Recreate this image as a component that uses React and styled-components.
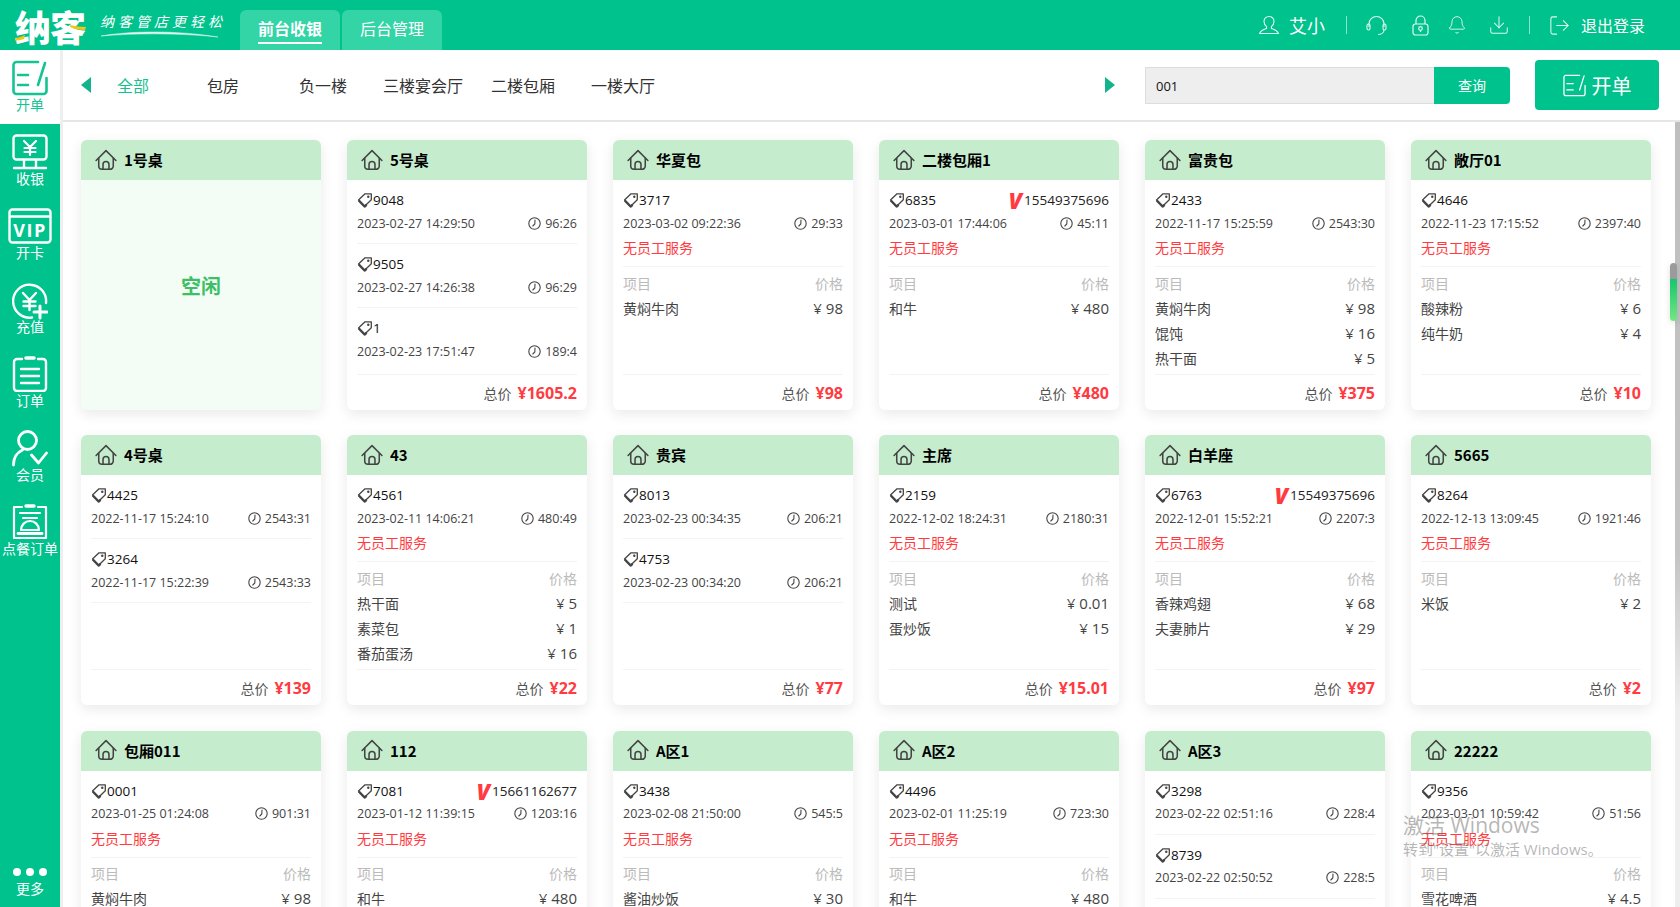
import React from 'react';
import styled, { createGlobalStyle } from 'styled-components';
import { Bell, Download, LogOut } from 'lucide-react';

const GREEN = '#00c28c';
const RED = '#ff3b41';

const tables = [
    { name: '1号桌', free: true },
    {
        name: '5号桌',
        total: '1605.2',
        orders: [
            { tag: '9048', time: '2023-02-27 14:29:50', dur: '96:26' },
            { tag: '9505', time: '2023-02-27 14:26:38', dur: '96:29' },
            { tag: '1', time: '2023-02-23 17:51:47', dur: '189:4' },
        ],
    },
    {
        name: '华夏包',
        total: '98',
        orders: [{ tag: '3717', time: '2023-03-02 09:22:36', dur: '29:33', staff: true }],
        items: [['黄焖牛肉', '98']],
    },
    {
        name: '二楼包厢1',
        total: '480',
        orders: [{ tag: '6835', phone: '15549375696', time: '2023-03-01 17:44:06', dur: '45:11', staff: true }],
        items: [['和牛', '480']],
    },
    {
        name: '富贵包',
        total: '375',
        orders: [{ tag: '2433', time: '2022-11-17 15:25:59', dur: '2543:30', staff: true }],
        items: [['黄焖牛肉', '98'], ['馄饨', '16'], ['热干面', '5']],
    },
    {
        name: '敞厅01',
        total: '10',
        orders: [{ tag: '4646', time: '2022-11-23 17:15:52', dur: '2397:40', staff: true }],
        items: [['酸辣粉', '6'], ['纯牛奶', '4']],
    },
    {
        name: '4号桌',
        total: '139',
        orders: [
            { tag: '4425', time: '2022-11-17 15:24:10', dur: '2543:31' },
            { tag: '3264', time: '2022-11-17 15:22:39', dur: '2543:33' },
        ],
    },
    {
        name: '43',
        total: '22',
        orders: [{ tag: '4561', time: '2023-02-11 14:06:21', dur: '480:49', staff: true }],
        items: [['热干面', '5'], ['素菜包', '1'], ['番茄蛋汤', '16']],
    },
    {
        name: '贵宾',
        total: '77',
        orders: [
            { tag: '8013', time: '2023-02-23 00:34:35', dur: '206:21' },
            { tag: '4753', time: '2023-02-23 00:34:20', dur: '206:21' },
        ],
    },
    {
        name: '主席',
        total: '15.01',
        orders: [{ tag: '2159', time: '2022-12-02 18:24:31', dur: '2180:31', staff: true }],
        items: [['测试', '0.01'], ['蛋炒饭', '15']],
    },
    {
        name: '白羊座',
        total: '97',
        orders: [{ tag: '6763', phone: '15549375696', time: '2022-12-01 15:52:21', dur: '2207:3', staff: true }],
        items: [['香辣鸡翅', '68'], ['夫妻肺片', '29']],
    },
    {
        name: '5665',
        total: '2',
        orders: [{ tag: '8264', time: '2022-12-13 13:09:45', dur: '1921:46', staff: true }],
        items: [['米饭', '2']],
    },
    {
        name: '包厢011',
        total: '98',
        orders: [{ tag: '0001', time: '2023-01-25 01:24:08', dur: '901:31', staff: true }],
        items: [['黄焖牛肉', '98']],
    },
    {
        name: '112',
        total: '480',
        orders: [{ tag: '7081', phone: '15661162677', time: '2023-01-12 11:39:15', dur: '1203:16', staff: true }],
        items: [['和牛', '480']],
    },
    {
        name: 'A区1',
        total: '30',
        orders: [{ tag: '3438', time: '2023-02-08 21:50:00', dur: '545:5', staff: true }],
        items: [['酱油炒饭', '30']],
    },
    {
        name: 'A区2',
        total: '480',
        orders: [{ tag: '4496', time: '2023-02-01 11:25:19', dur: '723:30', staff: true }],
        items: [['和牛', '480']],
    },
    {
        name: 'A区3',
        total: '0',
        orders: [
            { tag: '3298', time: '2023-02-22 02:51:16', dur: '228:4' },
            { tag: '8739', time: '2023-02-22 02:50:52', dur: '228:5' },
        ],
    },
    {
        name: '22222',
        total: '4.5',
        orders: [{ tag: '9356', time: '2023-03-01 10:59:42', dur: '51:56', staff: true }],
        items: [['雪花啤酒', '4.5']],
    },
];

const GlobalStyle = createGlobalStyle`
    html, body {
        margin: 0;
        height: 100%;
        overflow: hidden;
    }

    body {
        font-family: 'Open Sans', 'Noto Sans CJK SC', sans-serif;
        color: #333;
        background: #fff;
    }
`;

const Page = styled.div`
    display: flex;
    flex-direction: column;
    height: 100vh;
`;

const Topbar = styled.header`
    display: flex;
    flex: none;
    align-items: flex-end;
    height: 50px;
    background: ${GREEN};
`;

const Logo = styled.div`
    position: relative;
    display: flex;
    flex: none;
    align-items: center;
    box-sizing: border-box;
    width: 240px;
    height: 50px;
    padding-left: 15px;
`;

const LogoName = styled.span`
    width: 85px;
    padding-top: 3px;
    font-family: 'Noto Sans CJK SC', sans-serif;
    font-size: 36px;
    font-weight: 900;
    line-height: 47px;
    letter-spacing: -1px;
    color: #fff;
`;

const Slogan = styled.div`
    display: flex;
    flex-direction: column;
`;

const SloganText = styled.span`
    font-family: 'Noto Sans CJK SC', sans-serif;
    font-size: 14px;
    font-style: italic;
    line-height: 18px;
    letter-spacing: 4px;
    white-space: nowrap;
    color: #fff;
`;

const LogoMark = styled.svg`
    position: absolute;
    top: 0;
    left: 0;
`;

const ModeTab = styled.div`
    position: relative;
    display: flex;
    align-items: center;
    justify-content: center;
    box-sizing: border-box;
    width: 100px;
    height: 40px;
    margin-right: 2px;
    padding-bottom: 4px;
    font-family: 'Noto Sans CJK SC', sans-serif;
    font-size: 16px;
    font-weight: ${p => (p.$active ? 700 : 400)};
    color: #fff;
    background: #33d4a6;
    border-radius: 6px 6px 0 0;

    ${p => p.$active && `
        &::after {
            content: '';
            position: absolute;
            left: 18px;
            right: 18px;
            bottom: 6px;
            height: 2px;
            background: #fff;
        }
    `}
`;

const TopRight = styled.div`
    display: flex;
    align-items: center;
    height: 50px;
    margin-left: auto;
    padding-right: 35px;
    color: #fff;
`;

const TopIcon = styled.span`
    display: flex;
    margin-left: ${p => p.$ml}px;
    color: #e0f9f1;
`;

const UserName = styled.span`
    margin-left: 10px;
    font-size: 18px;
`;

const TopDivider = styled.span`
    width: 1px;
    height: 18px;
    margin-left: ${p => p.$ml}px;
    background: #8fe3cb;
`;

const Logout = styled.span`
    margin-left: 10px;
    font-size: 16px;
`;

const Body = styled.div`
    display: flex;
    flex: 1;
    min-height: 0;
`;

const Sidebar = styled.nav`
    display: flex;
    flex: none;
    flex-direction: column;
    width: 60px;
    background: ${GREEN};
    border-right: 3px solid #eee;
`;

const NavItem = styled.div`
    display: flex;
    flex: none;
    flex-direction: column;
    align-items: center;
    box-sizing: border-box;
    height: 74px;
    padding-top: 10px;
    color: ${p => (p.$active ? '#16c493' : '#fff')};
    background: ${p => (p.$active ? '#fff' : 'transparent')};
`;

const IconBox = styled.div`
    display: flex;
    flex: none;
    justify-content: center;
    height: 36px;
`;

const NavIcon = styled.svg`
    display: block;
    flex: none;
`;

const NavLabel = styled.span`
    font-family: 'Noto Sans CJK SC', sans-serif;
    font-size: 14px;
    line-height: 16px;
    white-space: nowrap;
`;

const More = styled.div`
    display: flex;
    flex-direction: column;
    align-items: center;
    margin-top: auto;
    padding-bottom: 11px;
    color: #fff;
`;

const Dots = styled.div`
    display: flex;
    gap: 5px;
    margin-bottom: 4px;
`;

const Dot = styled.i`
    width: 8px;
    height: 8px;
    background: #fff;
    border-radius: 50%;
`;

const Main = styled.main`
    position: relative;
    display: flex;
    flex: 1;
    flex-direction: column;
    min-width: 0;
    overflow: hidden;
`;

const Toolbar = styled.div`
    display: flex;
    flex: none;
    align-items: center;
    height: 70px;
    padding: 0 21px 0 18px;
    border-bottom: 2px solid #e6e6e6;
`;

const Arrow = styled.i`
    flex: none;
    width: 0;
    height: 0;
    border-top: 8px solid transparent;
    border-bottom: 8px solid transparent;
    ${p => (p.$right
        ? `border-left: 10px solid #11b48c; margin: 0 30px 0 auto;`
        : `border-right: 10px solid #11b48c;`)}
`;

const Tabs = styled.div`
    display: flex;
    margin-left: 2px;
`;

const Tab = styled.div`
    width: ${p => (p.$active ? 80 : 100)}px;
    font-size: 16px;
    text-align: center;
    white-space: nowrap;
    color: ${p => (p.$active ? '#19bf91' : '#333')};
`;

const Search = styled.div`
    display: flex;
    flex: none;
    height: 37px;
`;

const SearchInput = styled.div`
    display: flex;
    align-items: center;
    box-sizing: border-box;
    width: 289px;
    padding: 1px 0 0 10px;
    font-size: 13px;
    color: #111;
    background: #eee;
    border: 1px solid #ddd;
    border-right: none;
`;

const SearchButton = styled.div`
    display: flex;
    align-items: center;
    justify-content: center;
    width: 76px;
    font-size: 14px;
    color: #fff;
    background: ${GREEN};
    border-radius: 0 4px 4px 0;
`;

const OpenButton = styled.div`
    display: flex;
    flex: none;
    gap: 6px;
    align-items: center;
    justify-content: center;
    width: 124px;
    height: 50px;
    margin-left: 25px;
    font-size: 20px;
    color: #fff;
    background: ${GREEN};
    border-radius: 4px;
`;

const Content = styled.div`
    display: grid;
    flex: 1;
    grid-template-columns: repeat(6, 240px);
    grid-auto-rows: 270px;
    gap: 25.4px 26px;
    align-content: start;
    padding: 18px 0 0 18px;
    overflow: hidden;
`;

const Track = styled.div`
    position: absolute;
    top: 72px;
    right: 0;
    bottom: 0;
    width: 5px;
    background: linear-gradient(#bfbfbf 0, #c4c4c4 55%, #eee 75%);
`;

const Thumb = styled.div`
    position: absolute;
    top: 213px;
    right: 3px;
    width: 7px;
    height: 58px;
    background: linear-gradient(#9b9b9b 0, #9b9b9b 27%, #18c56f 28%, #72e882 100%);
    border-radius: 4px;
    box-shadow: 0 2px 6px rgba(0, 0, 0, 0.12);
`;

const Watermark = styled.div`
    position: absolute;
    left: 1340px;
    top: 762px;
    color: rgba(110, 110, 110, 0.5);
    pointer-events: none;
`;

const WatermarkTitle = styled.div`
    font-size: 21px;
    line-height: 26px;
    white-space: nowrap;
`;

const WatermarkText = styled.div`
    font-size: 15px;
    line-height: 22px;
    white-space: nowrap;
`;

const CardBox = styled.article`
    display: flex;
    flex-direction: column;
    min-height: 0;
    background: ${p => (p.$free ? '#f3fcf5' : '#fff')};
    border-radius: 6px;
    box-shadow: 0 4px 14px rgba(0, 0, 0, 0.09);
`;

const CardHead = styled.div`
    display: flex;
    flex: none;
    gap: 7px;
    align-items: center;
    box-sizing: border-box;
    height: 40px;
    padding: 0 0 1px 14px;
    font-family: 'Noto Sans CJK SC', sans-serif;
    font-size: 15px;
    font-weight: 700;
    color: #000;
    background: #c6ecce;
    border-radius: 6px 6px 0 0;
`;

const FreeBody = styled.div`
    display: flex;
    flex: 1;
    align-items: center;
    justify-content: center;
    padding-bottom: 20px;
    font-size: 20px;
    font-weight: 700;
    color: #3dbf65;
`;

const CardBody = styled.div`
    flex: 1;
    min-height: 0;
    padding: 0 10px;
    overflow: hidden;
`;

const Order = styled.div`
    padding: 8px 0 7px;
    border-bottom: 1px solid #f3f3f3;

    &:nth-child(3) {
        border-bottom: none;
    }
`;

const Row = styled.div`
    display: flex;
    align-items: center;
    justify-content: space-between;
    height: 24px;
`;

const TagCell = styled.span`
    display: flex;
    align-items: center;
    font-size: 13.5px;
    color: #111;
`;

const PhoneCell = styled.span`
    display: flex;
    gap: 2px;
    align-items: center;
    font-size: 13.5px;
    color: #222;
`;

const VipMark = styled.b`
    font-size: 22px;
    font-style: italic;
    font-weight: 800;
    line-height: 16px;
    color: ${RED};
`;

const TimeCell = styled.span`
    display: flex;
    gap: 4px;
    align-items: center;
    padding-bottom: 2px;
    font-size: 12.5px;
    white-space: nowrap;
    color: #444;
`;

const Staff = styled.div`
    font-size: 14px;
    line-height: 23px;
    color: ${RED};
`;

const ItemList = styled.div`
    padding-top: 3px;
`;

const ItemRow = styled.div`
    display: flex;
    align-items: center;
    justify-content: space-between;
    height: 25px;
    font-size: 14px;
    color: ${p => (p.$head ? '#bbb' : '#444')};
`;

const Price = styled.span`
    font-size: 15px;
`;

const Footer = styled.div`
    display: flex;
    flex: none;
    gap: 6px;
    align-items: center;
    justify-content: flex-end;
    box-sizing: border-box;
    height: 36px;
    margin: 0 10px;
    font-size: 14px;
    color: #555;
    border-top: 1px solid #f3f3f3;
`;

const Total = styled.b`
    font-size: 16px;
    font-weight: 700;
    color: ${RED};
`;

const HouseIcon = () => (
    <svg width="22" height="22" viewBox="0 0 20 20" fill="none" stroke="#444" strokeWidth="1.4" strokeLinecap="round" strokeLinejoin="round">
        <path d="M1 10.500 10 1.500l9 9" />
        <path d="M3.400 8.500v7a3 3 0 0 0 3 3h7.200a3 3 0 0 0 3-3v-7" />
        <path d="M7.300 18.500V14a2.700 2.700 0 0 1 5.400 0v4.500" />
    </svg>
);

const TagIcon = () => (
    <svg width="16" height="16" viewBox="0 0 16 16" fill="none" stroke="#444" strokeWidth="1.300" strokeLinejoin="round">
        <path d="M1.500 8 8 1.800h6.300v6L7.600 14.200z" />
        <path d="M1.800 8.500l5.800 6 2-1.700" strokeWidth="2.400" />
        <circle cx="11.300" cy="4.800" r="1.200" fill="#444" stroke="none" />
    </svg>
);

const ClockIcon = () => (
    <svg width="13" height="13" viewBox="0 0 13 13" fill="none" stroke="#444" strokeWidth="1.100" strokeLinecap="round">
        <circle cx="6.500" cy="6.500" r="5.700" />
        <path d="M7 3 6.800 7 4.800 9" />
    </svg>
);

const OpenIcon = ({ size = 36, weight = 2.6 }) => (
    <svg width={size} height={size} viewBox="0 0 36 36" fill="none" stroke="currentColor" strokeWidth={weight} strokeLinecap="round" strokeLinejoin="round">
        <path d="M26 2H4.500a3 3 0 0 0-3 3v26a3 3 0 0 0 3 3h27a3 3 0 0 0 3-3V18" />
        <path d="M6 15h10M6 25h10" />
        <path d="M33 3l-7 22" />
    </svg>
);

const PayIcon = () => (
    <NavIcon width="36" height="36" viewBox="0 0 36 36" fill="none" stroke="currentColor" strokeWidth="2.400" strokeLinecap="round" strokeLinejoin="round">
        <rect x="1.500" y="1.500" width="33" height="24" rx="3" />
        <path d="M12 7l6 6 6-6M18 13v8M12.500 14h11M12.500 18h11" strokeWidth="2.200" />
        <path d="M12 26v7M24 26v7M2 34h32" />
    </NavIcon>
);

const CardIcon = () => (
    <NavIcon width="44" height="36" viewBox="0 0 44 36" fill="none" stroke="currentColor" strokeWidth="2.400">
        <rect x="1.500" y="1.500" width="41" height="33" rx="3" />
        <path d="M2 8.500h40" />
        <text x="22" y="29" fontFamily="Open Sans, sans-serif" fontSize="18" fontWeight="700" textAnchor="middle" fill="currentColor" stroke="none" letterSpacing="1.500">VIP</text>
    </NavIcon>
);

const ChargeIcon = () => (
    <NavIcon width="36" height="38" viewBox="0 0 36 38" fill="none" stroke="currentColor" strokeWidth="2.400" strokeLinecap="round" strokeLinejoin="round">
        <path d="M20 35.500A16.500 16.500 0 1 1 34 21" />
        <path d="M11 11l6.500 7 6.500-7M17.500 18v10M11.500 19.500h12M11.500 24h12" />
        <path d="M28 24v12M22 30h13" strokeWidth="3" />
    </NavIcon>
);

const OrderIcon = () => (
    <NavIcon width="36" height="36" viewBox="0 0 36 36" fill="none" stroke="currentColor" strokeWidth="2.400" strokeLinecap="round" strokeLinejoin="round">
        <path d="M10 3H5a3 3 0 0 0-3 3v26a3 3 0 0 0 3 3h26a3 3 0 0 0 3-3V6a3 3 0 0 0-3-3h-5" />
        <path d="M14 2h8" strokeWidth="3.600" />
        <path d="M9 13h18M9 20h18M9 27h18" />
    </NavIcon>
);

const MemberIcon = () => (
    <NavIcon width="36" height="38" viewBox="0 0 36 38" fill="none" stroke="currentColor" strokeWidth="2.800" strokeLinecap="round" strokeLinejoin="round">
        <circle cx="15.500" cy="10.500" r="9" />
        <path d="M1.500 35c0-7 3.500-12.500 9-15" />
        <path d="M19.500 25l7 8 8-10" />
    </NavIcon>
);

const DishIcon = () => (
    <NavIcon width="36" height="36" viewBox="0 0 36 36" fill="none" stroke="currentColor" strokeWidth="2.200" strokeLinecap="round" strokeLinejoin="round">
        <path d="M10 3H2v31h32V3h-8" />
        <path d="M14 2h8" strokeWidth="3.400" />
        <path d="M8 9h20M11 14h14" />
        <path d="M9 26a9 9 0 0 1 18 0z" />
        <path d="M6 29.500h24" strokeWidth="2.800" />
    </NavIcon>
);

const NAV = [
    { label: '开单', icon: <OpenIcon />, active: true },
    { label: '收银', icon: <PayIcon /> },
    { label: '开卡', icon: <CardIcon /> },
    { label: '充值', icon: <ChargeIcon /> },
    { label: '订单', icon: <OrderIcon /> },
    { label: '会员', icon: <MemberIcon /> },
    { label: '点餐订单', icon: <DishIcon /> },
];

const TABS = ['全部', '包房', '负一楼', '三楼宴会厅', '二楼包厢', '一楼大厅'];

const TableCard = ({ table }) => {
    if (table.free) {
        return (
            <CardBox $free>
                <CardHead><HouseIcon />{table.name}</CardHead>
                <FreeBody>空闲</FreeBody>
            </CardBox>
        );
    }

    return (
        <CardBox>
            <CardHead><HouseIcon />{table.name}</CardHead>
            <CardBody>
                {table.orders.map(order => (
                    <Order key={order.tag}>
                        <Row>
                            <TagCell><TagIcon />{order.tag}</TagCell>
                            {order.phone ? <PhoneCell><VipMark>V</VipMark>{order.phone}</PhoneCell> : null}
                        </Row>
                        <Row>
                            <TimeCell>{order.time}</TimeCell>
                            <TimeCell><ClockIcon />{order.dur}</TimeCell>
                        </Row>
                        {order.staff ? <Staff>无员工服务</Staff> : null}
                    </Order>
                ))}
                {table.items ? (
                    <ItemList>
                        <ItemRow $head><span>项目</span><span>价格</span></ItemRow>
                        {table.items.map(([name, price]) => (
                            <ItemRow key={name}><span>{name}</span><Price>¥ {price}</Price></ItemRow>
                        ))}
                    </ItemList>
                ) : null}
            </CardBody>
            <Footer>总价<Total>¥{table.total}</Total></Footer>
        </CardBox>
    );
};

export default function App() {
    return (
        <Page>
            <GlobalStyle />
            <Topbar>
                <Logo>
                    <LogoName>纳客</LogoName>
                    <Slogan>
                        <SloganText>纳客管店更轻松</SloganText>
                        <svg width="120" height="8" viewBox="0 0 120 8" fill="none">
                            <path d="M1 6C30 1 75 0 118 7C80 3 35 3 1 6z" fill="#dff7ef" stroke="#dff7ef" strokeWidth="0.500" />
                        </svg>
                    </Slogan>
                    <LogoMark width="90" height="50" viewBox="0 0 90 50">
                        <path d="M15 38c3 0 6-1 10-3l-1 4c-3 1-6 1.500-9 1.500z" fill="#f5c518" />
                        <path d="M70 25c5 1 10 2 16 2l-1 3c-6 0-11-1-15-3z" fill="#f5c518" />
                    </LogoMark>
                </Logo>
                <ModeTab $active>前台收银</ModeTab>
                <ModeTab>后台管理</ModeTab>
                <TopRight>
                    <TopIcon $ml={0}>
                        <svg width="20" height="20" viewBox="0 0 20 20" fill="none" stroke="currentColor" strokeWidth="1.100">
                            <path d="M10 1.500c-3 0-5 2.200-5 5 0 2.500 1.200 4 2.600 5.200v1.800c-2.500 1-6 2-7 5h18.800c-1-3-4.500-4-7-5v-1.800C13.800 10.500 15 9 15 6.500c0-2.800-2-5-5-5z" />
                        </svg>
                    </TopIcon>
                    <UserName>艾小</UserName>
                    <TopDivider $ml={21} />
                    <TopIcon $ml={19}>
                        <svg width="21" height="21" viewBox="0 0 21 21" fill="none" stroke="currentColor" strokeWidth="1.100">
                            <path d="M3 12V9a7.500 7.500 0 0 1 15 0v3" />
                            <rect x="1" y="9" width="3" height="6" rx="1.500" />
                            <rect x="17" y="9" width="3" height="6" rx="1.500" />
                            <path d="M18 15c0 3-3 4.500-6 4.500" />
                        </svg>
                    </TopIcon>
                    <TopIcon $ml={25}>
                        <svg width="17" height="21" viewBox="0 0 17 21" fill="none" stroke="currentColor" strokeWidth="1.200">
                            <path d="M4 9V5.500a4.500 4.500 0 0 1 9 0V9" />
                            <rect x="1" y="9" width="15" height="11" rx="2.500" />
                            <circle cx="8.500" cy="13.500" r="1.800" />
                            <path d="M8.500 15.300V17" />
                        </svg>
                    </TopIcon>
                    <TopIcon $ml={18}><Bell size={20} strokeWidth={1.1} /></TopIcon>
                    <TopIcon $ml={21}><Download size={22} strokeWidth={1.1} /></TopIcon>
                    <TopDivider $ml={19} />
                    <TopIcon $ml={18}><LogOut size={23} strokeWidth={1.1} /></TopIcon>
                    <Logout>退出登录</Logout>
                </TopRight>
            </Topbar>
            <Body>
                <Sidebar>
                    {NAV.map(item => (
                        <NavItem key={item.label} $active={item.active}>
                            <IconBox>{item.icon}</IconBox>
                            <NavLabel>{item.label}</NavLabel>
                        </NavItem>
                    ))}
                    <More>
                        <Dots><Dot /><Dot /><Dot /></Dots>
                        <NavLabel>更多</NavLabel>
                    </More>
                </Sidebar>
                <Main>
                    <Toolbar>
                        <Arrow />
                        <Tabs>
                            {TABS.map((tab, i) => <Tab key={tab} $active={i === 0}>{tab}</Tab>)}
                        </Tabs>
                        <Arrow $right />
                        <Search>
                            <SearchInput>001</SearchInput>
                            <SearchButton>查询</SearchButton>
                        </Search>
                        <OpenButton><OpenIcon size={23} weight={2} />开单</OpenButton>
                    </Toolbar>
                    <Content>
                        {tables.map(table => <TableCard key={table.name} table={table} />)}
                    </Content>
                    <Track />
                    <Thumb />
                    <Watermark>
                        <WatermarkTitle>激活 Windows</WatermarkTitle>
                        <WatermarkText>转到"设置"以激活 Windows。</WatermarkText>
                    </Watermark>
                </Main>
            </Body>
        </Page>
    );
}
